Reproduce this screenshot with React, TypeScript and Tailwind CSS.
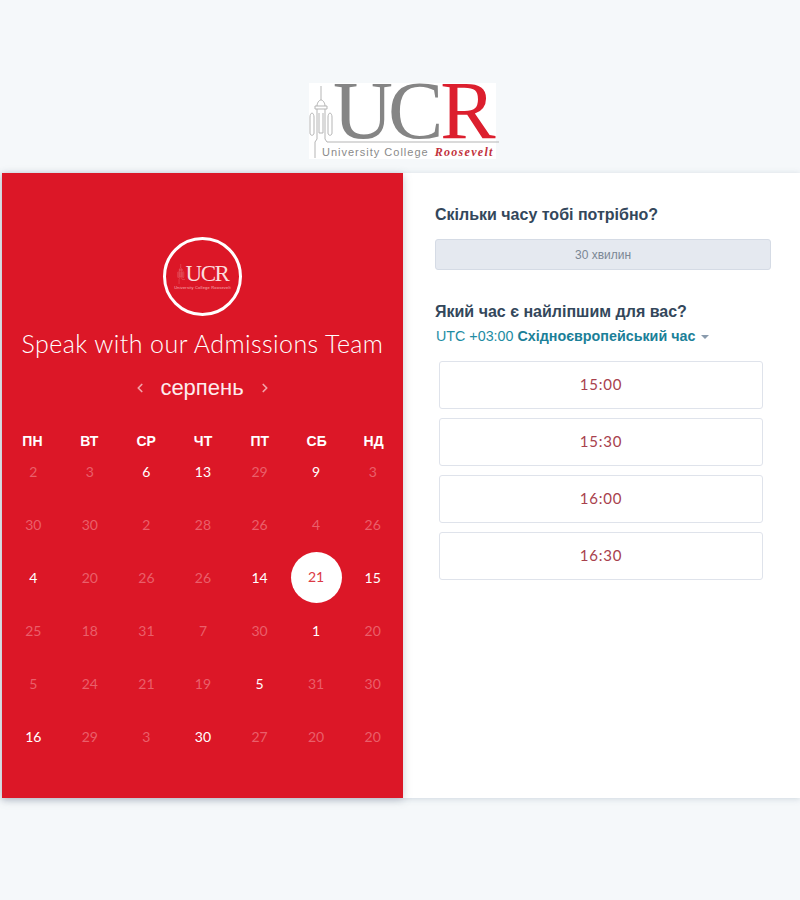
import React from 'react';
import { ChevronLeft, ChevronRight } from 'lucide-react';

const weekDays = ['ПН', 'ВТ', 'СР', 'ЧТ', 'ПТ', 'СБ', 'НД'];

// [day, available]
const weeks: [number, boolean][][] = [
  [[2, false], [3, false], [6, true], [13, true], [29, false], [9, true], [3, false]],
  [[30, false], [30, false], [2, false], [28, false], [26, false], [4, false], [26, false]],
  [[4, true], [20, false], [26, false], [26, false], [14, true], [21, true], [15, true]],
  [[25, false], [18, false], [31, false], [7, false], [30, false], [1, true], [20, false]],
  [[5, false], [24, false], [21, false], [19, false], [5, true], [31, false], [30, false]],
  [[16, true], [29, false], [3, false], [30, true], [27, false], [20, false], [20, false]],
];

const times = ['15:00', '15:30', '16:00', '16:30'];

const Tower = ({ color, className }: { color: string; className: string }) => (
  <svg viewBox="0 0 24 72" className={className} fill="none" stroke={color} strokeWidth="1">
    <path d="M11 0v14M7 20c0-3 2-6 4-6s4 3 4 6M5 20h12v3H5zM7 23v30M15 23v30M9 27v20h4V27M7 53l-2 3v16M15 53l2 3h172" />
    <path d="M2 27c-1 0-2 2-2 4v16c0 3 4 3 4 0V31c0-2-1-4-2-4zM20 27c-1 0-2 2-2 4v16c0 3 4 3 4 0V31c0-2-1-4-2-4z" />
  </svg>
);

const App: React.FC = () => {
  return (
    <div className="h-[900px] w-[800px] overflow-hidden bg-[#f5f8fa] font-['Liberation_Sans',sans-serif]">
      <div className="flex h-[173px] items-end justify-center pb-[14px] pl-[5px]">
        <div className="flex h-[76px] w-[187px] flex-col bg-white pl-px">
          <div className="flex h-[62px] items-start">
            <Tower color="#b5b5b5" className="mt-[3px] h-[72px] w-[24px] shrink-0 overflow-visible" />
            <span className="-ml-[1px] font-['Liberation_Serif',serif] text-[83px] leading-[54px] tracking-[-5px] text-[#858585]">UC</span>
            <span className="ml-[2px] font-['Liberation_Serif',serif] text-[83px] leading-[54px] text-[#dc1f2e]">R</span>
          </div>
          <div className="flex items-baseline whitespace-nowrap pl-[12px] text-[11px] leading-[14px] tracking-[1px] text-[#8a8a8a]">
            University College
            <span className="ml-[6px] font-['Liberation_Serif',serif] text-[12px] font-bold italic tracking-[1.3px] text-[#c2323c]">Roosevelt</span>
          </div>
        </div>
      </div>

      <div className="ml-[2px] flex h-[625px] bg-white shadow-[0_1px_6px_rgba(120,140,160,0.3)]">
        <div className="flex w-[401px] shrink-0 flex-col items-center bg-[#dc1727] text-white shadow-[0_2px_8px_rgba(100,110,130,0.35)]">
          <div className="mt-[64px] flex h-[79px] w-[79px] flex-col items-center justify-center rounded-full border-[3px] border-white">
            <div className="flex items-center text-[#f6b5ba]">
              <Tower color="#f0a0a6" className="h-[20px] w-[8px]" />
              <span className="ml-px font-['Liberation_Serif',serif] text-[23px] leading-[20px] tracking-[-1.5px] text-[#fbdcde]">UCR</span>
            </div>
            <span className="mt-px whitespace-nowrap text-[4px] leading-[5px] tracking-[0.2px] text-[#f6b5ba]">University College Roosevelt</span>
          </div>

          <h1 className="mt-[9px] whitespace-nowrap font-['Lato',sans-serif] text-[25px] font-light leading-[36px] tracking-[0.42px] text-white">
            Speak with our Admissions Team
          </h1>

          <div className="mt-[12px] flex h-[30px] items-center">
            <ChevronLeft size={14} strokeWidth={3} className="mr-[13px] text-[#f2a2a8]" />
            <span className="text-[22px] leading-[30px] text-[#fdecee]">серпень</span>
            <ChevronRight size={14} strokeWidth={3} className="ml-[14px] text-[#f2a2a8]" />
          </div>

          <div className="ml-px mt-[34px] grid w-[398px] grid-cols-7 text-center text-[14px] font-bold leading-[8px]">
            {weekDays.map(d => (
              <div key={d}>{d}</div>
            ))}
          </div>

          <div className="ml-px grid w-[396px] grid-cols-7 grid-rows-[repeat(6,53px)] text-center font-['Lato',sans-serif] text-[14px]">
            {weeks.flat().map(([day, available], i) => {
              const selected = i === 19;
              return (
                <div key={i} className="flex items-center justify-center">
                  {selected ? (
                    <span className="flex h-[51px] w-[51px] items-center justify-center rounded-full bg-white pb-[3px] text-[#dc3a45]">{day}</span>
                  ) : (
                    <span className={available ? 'text-white' : 'text-[#ea5f6a]'}>{day}</span>
                  )}
                </div>
              );
            })}
          </div>
        </div>

        <div className="flex-1 pl-[32px] pr-[29px] pt-[31px]">
          <h2 className="mt-px text-[16px] font-bold leading-[20px] text-[#33475b]">Скільки часу тобі потрібно?</h2>
          <div className="mt-[14px] flex h-[31px] items-center justify-center rounded-[3px] border border-[#d5dbe5] bg-[#e5e9f0] text-[12px] text-[#7b8794]">
            30 хвилин
          </div>
          <h2 className="mt-[32px] text-[16px] font-bold leading-[20px] text-[#33475b]">Який час є найліпшим для вас?</h2>
          <div className="mt-[4px] flex items-center pl-px text-[14.3px] leading-[20px]">
            <span className="text-[#1e8ca3]">UTC +03:00</span>
            <span className="ml-[4px] font-bold text-[#1b8098]">Східноєвропейський час</span>
            <span className="ml-[6px] mt-px h-0 w-0 border-x-[4px] border-t-[4px] border-x-transparent border-t-[#8a9bad]" />
          </div>
          <div className="mt-[15px] flex flex-col gap-[9px] pl-[4px] pr-[8px]">
            {times.map(t => (
              <div
                key={t}
                className="flex h-[48px] items-center justify-center rounded-[3px] border border-[#dfe3eb] bg-white pb-[2px] font-['Lato',sans-serif] text-[15px] tracking-[0.8px] text-[#a8414d]"
              >
                {t}
              </div>
            ))}
          </div>
        </div>
      </div>
    </div>
  );
};

export default App;
